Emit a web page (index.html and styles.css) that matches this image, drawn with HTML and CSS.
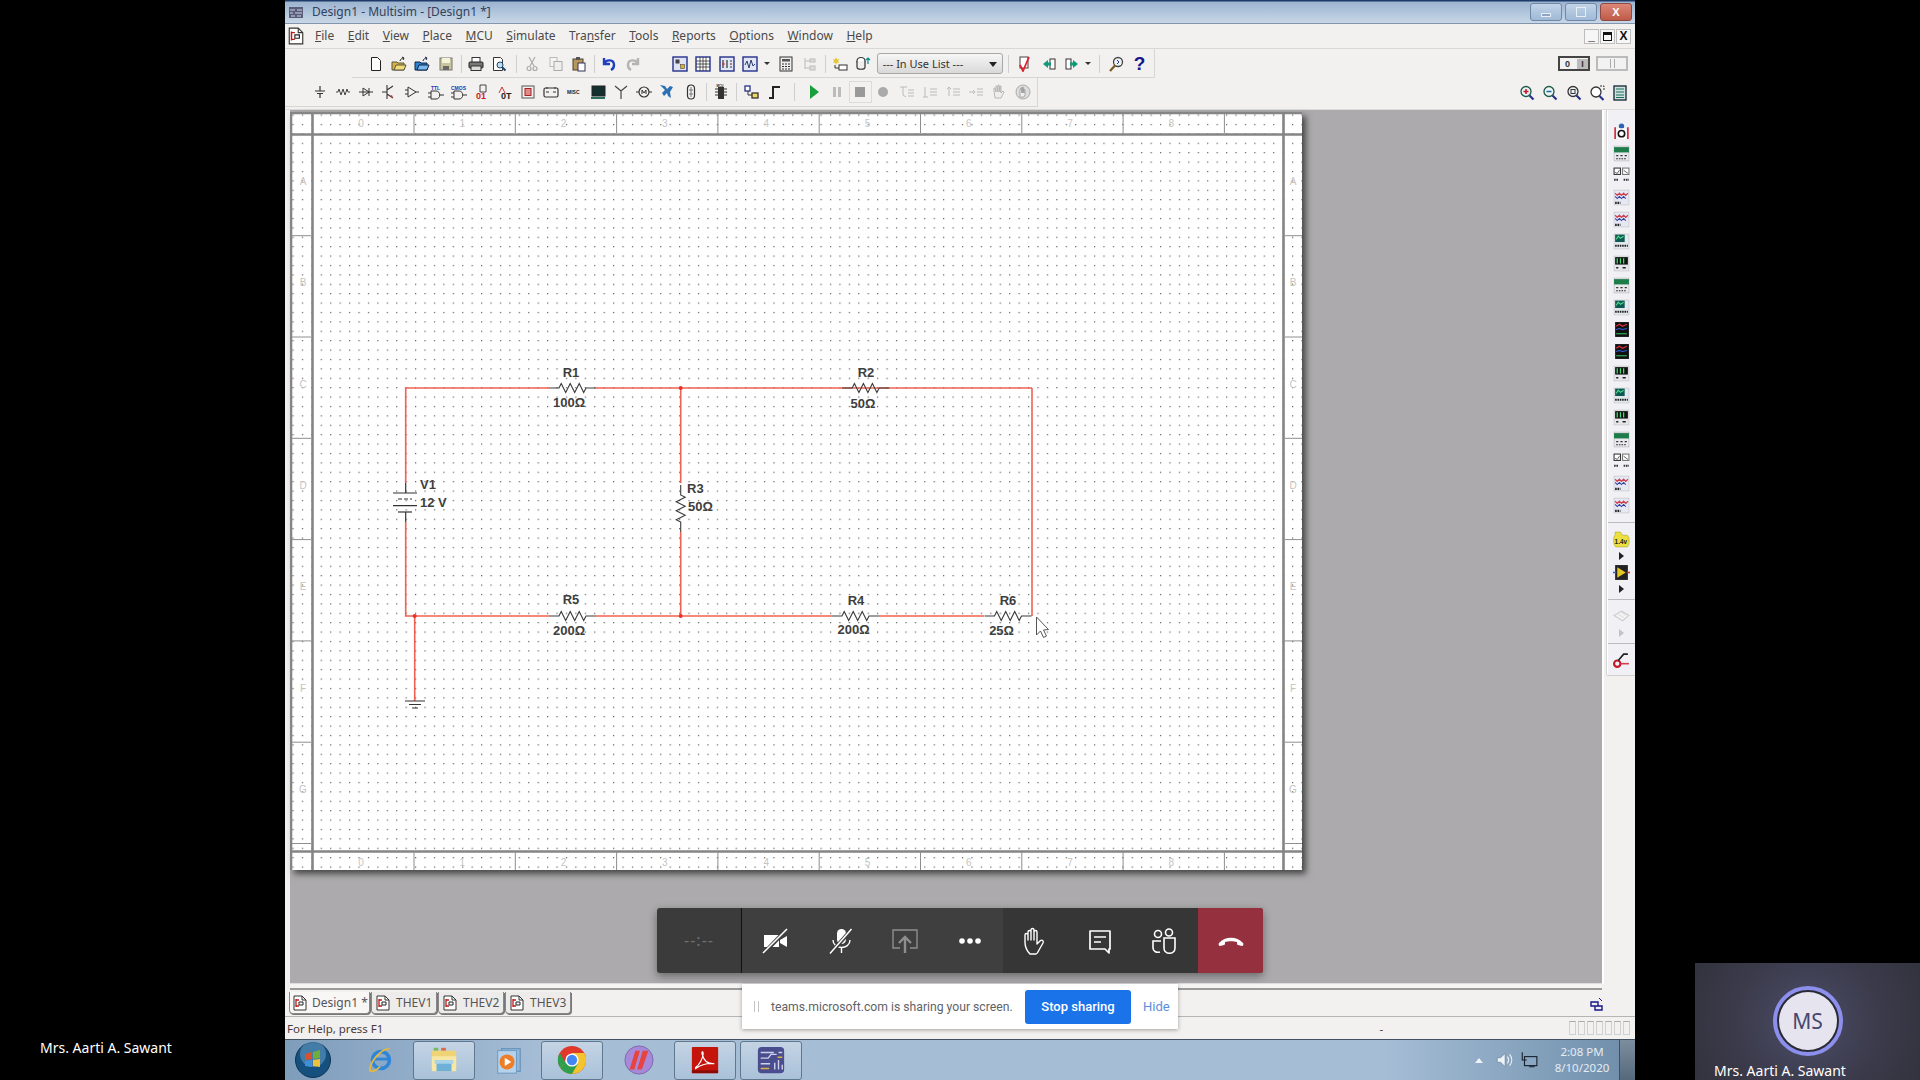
FILE: index.html
```html
<!DOCTYPE html>
<html lang="en">
<head>
    <meta charset="UTF-8">
    <title>Design1 - Multisim</title>
    <link rel="stylesheet" href="styles.css">
</head>
<body>
    <!-- icon sprite -->
    <svg class="sprite" xmlns="http://www.w3.org/2000/svg">
        <symbol id="i-doc" viewBox="0 0 16 16"><path d="M2 1h8l4 4v10H2z" fill="#fff" stroke="#333"/><path d="M10 1v4h4" fill="none" stroke="#333"/><path d="M4 4v8M4 5h3M4 11h3" fill="none" stroke="#c01818" stroke-width="1.300"/><path d="M7 7h4v3H7z" fill="none" stroke="#222"/></symbol>
        <symbol id="i-new" viewBox="0 0 16 16"><path d="M3.5 1.500h6l3 3v10h-9z" fill="#fff" stroke="#222"/></symbol>
        <symbol id="i-open" viewBox="0 0 16 16"><path d="M1 6h5l1 1h6v7H1z" fill="#d9b23c" stroke="#554"/><path d="M3 14l2-5h10l-2 5z" fill="#f3dc78" stroke="#554"/><path d="M9 5c1-3 3-3 4-3m0 0l-2-1m2 1l-1 2" stroke="#222" fill="none"/></symbol>
        <symbol id="i-open2" viewBox="0 0 16 16"><path d="M1 6h5l1 1h6v7H1z" fill="#2d7fd0" stroke="#124"/><path d="M3 14l2-5h10l-2 5z" fill="#7ab8f0" stroke="#124"/><path d="M9 5c1-3 3-3 4-3m0 0l-2-1m2 1l-1 2" stroke="#124" fill="none"/></symbol>
        <symbol id="i-save" viewBox="0 0 16 16"><rect x="2" y="2" width="12" height="12" fill="#c8c59a" stroke="#777"/><rect x="4" y="2" width="8" height="5" fill="#f4f2d8"/><rect x="5" y="10" width="6" height="4" fill="#666"/></symbol>
        <symbol id="i-print" viewBox="0 0 16 16"><rect x="4" y="1.500" width="8" height="5" fill="#fff" stroke="#333"/><rect x="1" y="6" width="14" height="6" rx="1" fill="#777" stroke="#222"/><rect x="3" y="10" width="10" height="4.500" fill="#ddd" stroke="#333"/></symbol>
        <symbol id="i-preview" viewBox="0 0 16 16"><path d="M2.500 1.500h7l2 2v11h-9z" fill="#fff" stroke="#333"/><circle cx="9" cy="9" r="3" fill="#bfe0ef" stroke="#246"/><path d="M11 11l3.500 3.500" stroke="#246" stroke-width="2"/></symbol>
        <symbol id="i-cut" viewBox="0 0 16 16"><path d="M5 1l5 9M11 1L6 10" stroke="#aaa" stroke-width="1.200" fill="none"/><circle cx="5" cy="12.500" r="2" fill="none" stroke="#aaa" stroke-width="1.200"/><circle cx="11" cy="12.500" r="2" fill="none" stroke="#aaa" stroke-width="1.200"/></symbol>
        <symbol id="i-copy" viewBox="0 0 16 16"><rect x="2" y="1.500" width="7" height="9" fill="#f4f4f4" stroke="#bbb"/><rect x="6" y="5.500" width="8" height="9" fill="#eee" stroke="#aaa"/></symbol>
        <symbol id="i-paste" viewBox="0 0 16 16"><rect x="2" y="3" width="10" height="11" fill="#b9965a" stroke="#443"/><rect x="5" y="1" width="4" height="3" fill="#555"/><rect x="7" y="7" width="7" height="8" fill="#fff" stroke="#335"/></symbol>
        <symbol id="i-undo" viewBox="0 0 16 16"><path d="M3 2v6h6M3 8c2-5 10-5 10 1 0 2-1 4-3 5" fill="none" stroke="#1f3fc0" stroke-width="2.400"/></symbol>
        <symbol id="i-redo" viewBox="0 0 16 16"><path d="M13 2v6H7M13 8C11 3 3 3 3 9c0 2 1 4 3 5" fill="none" stroke="#b4b4b4" stroke-width="2.400"/></symbol>
        <symbol id="i-hier" viewBox="0 0 16 16"><rect x="1" y="1" width="14" height="14" fill="#dfe3f5" stroke="#24308a" stroke-width="1.400"/><rect x="3.500" y="3.500" width="4" height="4" fill="#444"/><rect x="8.500" y="8.500" width="4" height="4" fill="#d8b030" stroke="#333" stroke-width=".5"/></symbol>
        <symbol id="i-grid" viewBox="0 0 16 16"><rect x="1" y="1" width="14" height="14" fill="#fff" stroke="#24308a" stroke-width="1.400"/><path d="M1 5h14M1 8h14M1 11h14M5 1v14M8 1v14M11 1v14" stroke="#333" stroke-width=".8"/></symbol>
        <symbol id="i-bars" viewBox="0 0 16 16"><rect x="1" y="1" width="14" height="14" fill="#e3e6f5" stroke="#24308a" stroke-width="1.400"/><path d="M4 4v8M8 4v8M11 5h2M11 8h2M11 11h2" stroke="#333" stroke-width="1.200"/><path d="M3 8h3" stroke="#c33"/></symbol>
        <symbol id="i-wave" viewBox="0 0 16 16"><rect x="1" y="1" width="14" height="14" fill="#e3e6f5" stroke="#24308a" stroke-width="1.400"/><path d="M3 9l2-4 2 7 2-8 2 6 2-2" fill="none" stroke="#2a3a6a"/></symbol>
        <symbol id="i-calc" viewBox="0 0 16 16"><rect x="2" y="1" width="12" height="14" fill="#eee" stroke="#333"/><rect x="4" y="3" width="8" height="2.500" fill="#555"/><path d="M4 8h2M7 8h2M10 8h2M4 10.500h2M7 10.500h2M10 10.500h2M4 13h2M7 13h2M10 13h2" stroke="#333" stroke-width="1.200"/></symbol>
        <symbol id="i-tree" viewBox="0 0 16 16"><path d="M4 2v11M4 5h5M4 12h5" stroke="#bbb" fill="none"/><rect x="9" y="3" width="5" height="3" fill="#ddd" stroke="#bbb"/><rect x="9" y="10" width="5" height="4" fill="#ddd" stroke="#bbb"/></symbol>
        <symbol id="i-star" viewBox="0 0 16 16"><path d="M4 1l1 2.500 2.500-.5-1.500 2 1.500 2-2.500-.5L4 9 3 6.500 1 7l1-2-1-2 2 .5z" fill="#e2c632"/><rect x="7" y="9" width="8" height="5" fill="#fff" stroke="#333"/><path d="M3 9v3h4" stroke="#333" fill="none"/></symbol>
        <symbol id="i-db" viewBox="0 0 16 16"><ellipse cx="6" cy="5" rx="4" ry="3.500" fill="#fff" stroke="#333" stroke-width="1.200"/><path d="M2 5v6c0 3 8 3 8 0V5" fill="#eee" stroke="#333" stroke-width="1.200"/><path d="M13 8V2m-2 2l2-2 2 2" stroke="#0a8a8a" fill="none" stroke-width="1.200"/></symbol>
        <symbol id="i-check" viewBox="0 0 16 16"><rect x="3" y="1" width="8" height="11" fill="#fff" stroke="#444"/><path d="M3 9l3 6 6-14" fill="none" stroke="#e02030" stroke-width="1.800"/></symbol>
        <symbol id="i-back" viewBox="0 0 16 16"><rect x="9" y="3" width="5" height="10" fill="#fff" stroke="#333"/><path d="M2 8l5-4v8z" fill="#109a78"/><rect x="6" y="6.500" width="4" height="3" fill="#109a78"/></symbol>
        <symbol id="i-fwd" viewBox="0 0 16 16"><rect x="2" y="3" width="5" height="10" fill="#fff" stroke="#333"/><path d="M14 8L9 4v8z" fill="#109a78"/><rect x="6" y="6.500" width="4" height="3" fill="#109a78"/></symbol>
        <symbol id="i-find" viewBox="0 0 16 16"><circle cx="10" cy="6" r="4.500" fill="#eef3f8" stroke="#444" stroke-width="1.300"/><path d="M7 9.500L2 15" stroke="#7a5a20" stroke-width="2.200"/><path d="M9 4l2 2-2 2" stroke="#24308a" fill="none"/></symbol>

        <symbol id="i-src" viewBox="0 0 16 16"><path d="M8 2v5M8 9v5M3 7h10M5 9.500h6" stroke="#333" stroke-width="1.200"/></symbol>
        <symbol id="i-zig" viewBox="0 0 16 16"><path d="M1 8h2l1-3 2 6 2-6 2 6 2-6 1 3h2" fill="none" stroke="#444"/></symbol>
        <symbol id="i-dio" viewBox="0 0 16 16"><path d="M1 8h14M11 4v8M5 4l6 4-6 4z" fill="none" stroke="#333"/></symbol>
        <symbol id="i-tra" viewBox="0 0 16 16"><path d="M6 1v14M1 8h5M6 6l6-4M6 10l6 4" fill="none" stroke="#333" stroke-width="1.100"/><path d="M9 12l3 2-1-3z" fill="#c33"/></symbol>
        <symbol id="i-amp" viewBox="0 0 16 16"><path d="M4 3l8 5-8 5zM1 6h3M1 10h3M12 8h3" fill="none" stroke="#333"/></symbol>
        <symbol id="i-ind" viewBox="0 0 16 16"><rect x="2" y="2" width="12" height="12" fill="none" stroke="#555"/><rect x="5" y="4.500" width="6" height="7" fill="#e08a8a" stroke="#a22"/></symbol>
        <symbol id="i-pow" viewBox="0 0 16 16"><rect x="1" y="4" width="14" height="9" rx="1.500" fill="none" stroke="#333" stroke-width="1.200"/><path d="M4 3v2M12 3v2M3 8h3M10 8h3" stroke="#333"/></symbol>
        <symbol id="i-scr" viewBox="0 0 16 16"><rect x="2" y="2" width="13" height="10" fill="#14302e" stroke="#222"/><path d="M1 13h14v2H1z" fill="#2a6e60"/></symbol>
        <symbol id="i-ant" viewBox="0 0 16 16"><path d="M8 15V7M2 2l6 5 6-5" fill="none" stroke="#444" stroke-width="1.200"/></symbol>
        <symbol id="i-mot" viewBox="0 0 16 16"><circle cx="8" cy="8" r="5" fill="none" stroke="#333" stroke-width="1.200"/><path d="M0 8h3M13 8h3M6 10V6l2 3 2-3v4" fill="none" stroke="#333"/></symbol>
        <symbol id="i-x" viewBox="0 0 16 16"><path d="M1 1l5 1 2 3 3-3 3 1-3 5 1 6-3-2-1-3-3 3-2-3 3-3z" fill="#2c6fb2"/></symbol>
        <symbol id="i-bulb" viewBox="0 0 16 16"><rect x="4.500" y="1" width="7" height="14" rx="3.500" fill="#f4f4f4" stroke="#333" stroke-width="1.200"/><path d="M8 3v10M6 6h4M6 10h4" stroke="#777"/></symbol>
        <symbol id="i-sub" viewBox="0 0 16 16"><rect x="2" y="2" width="5" height="5" fill="#fff" stroke="#24308a" stroke-width="1.300"/><rect x="9" y="9" width="6" height="5" fill="#f0d860" stroke="#333" stroke-width="1.300"/><path d="M5 7v4h4" fill="none" stroke="#333"/></symbol>
        <symbol id="i-step" viewBox="0 0 16 16"><path d="M2 14h4V3h7" fill="none" stroke="#222" stroke-width="2"/></symbol>
        <symbol id="i-play" viewBox="0 0 16 16"><path d="M4 1l9 7-9 7z" fill="#17a03c"/></symbol>
        <symbol id="i-pause" viewBox="0 0 16 16"><path d="M4 3h3v10H4zM9 3h3v10H9z" fill="#bbb"/></symbol>
        <symbol id="i-stop" viewBox="0 0 16 16"><rect x="3" y="3" width="10" height="10" fill="#999"/></symbol>
        <symbol id="i-brk" viewBox="0 0 16 16"><circle cx="8" cy="8" r="5" fill="#aaa"/></symbol>
        <symbol id="i-lst1" viewBox="0 0 16 16"><path d="M1 3h7M4 3v8l3 2M9 6h6M9 9h6M9 12h6" fill="none" stroke="#bbb"/></symbol>
        <symbol id="i-lst2" viewBox="0 0 16 16"><path d="M3 3v10M1 13h5M8 5h7M8 8h7M8 11h7" fill="none" stroke="#bbb"/></symbol>
        <symbol id="i-lst3" viewBox="0 0 16 16"><path d="M4 12V3M2 5l2-2 2 2M8 5h7M8 8h7M8 11h7" fill="none" stroke="#bbb"/></symbol>
        <symbol id="i-lst4" viewBox="0 0 16 16"><path d="M1 8h6M5 6l2 2-2 2M9 5h6M9 8h6M9 11h6" fill="none" stroke="#bbb"/></symbol>
        <symbol id="i-hand" viewBox="0 0 16 16"><path d="M4 14L3 7V4l1 0 1 4V2h1l1 6V1h1l1 7V2h1v7l2-2 1 1-3 6z" fill="#eee" stroke="#aaa" stroke-width=".8"/></symbol>
        <symbol id="i-hand2" viewBox="0 0 16 16"><circle cx="8" cy="8" r="7" fill="#ddd" stroke="#aaa"/><path d="M5 13V6l1-2 1 5V3l1 6V3l1 6V5l1 1v5l-1 2z" fill="#eee" stroke="#999" stroke-width=".8"/></symbol>
        <symbol id="i-zin" viewBox="0 0 16 16"><circle cx="7" cy="6.500" r="5" fill="#eef3f4" stroke="#1c5a4a" stroke-width="1.300"/><path d="M7 4v5M4.500 6.500h5" stroke="#c01828" stroke-width="1.500"/><path d="M10.500 10.500l4 4" stroke="#24308a" stroke-width="2.200"/></symbol>
        <symbol id="i-zout" viewBox="0 0 16 16"><circle cx="7" cy="6.500" r="5" fill="#eef3f4" stroke="#1c5a4a" stroke-width="1.300"/><path d="M4.500 6.500h5" stroke="#1c6a9a" stroke-width="1.500"/><path d="M10.500 10.500l4 4" stroke="#24308a" stroke-width="2.200"/></symbol>
        <symbol id="i-zarea" viewBox="0 0 16 16"><circle cx="7" cy="6.500" r="5" fill="#eef3f4" stroke="#333" stroke-width="1.300"/><rect x="5" y="4.500" width="4" height="4" fill="none" stroke="#333"/><path d="M10.500 10.500l4 4" stroke="#24308a" stroke-width="2.200"/></symbol>
        <symbol id="i-zfit" viewBox="0 0 16 16"><circle cx="7" cy="7" r="5" fill="#fff" stroke="#333" stroke-width="1.300"/><path d="M10.500 11l4 4" stroke="#24308a" stroke-width="2.200"/><path d="M11 1h4v4" fill="none" stroke="#333" stroke-dasharray="2 1"/></symbol>
        <symbol id="i-sheet" viewBox="0 0 16 16"><rect x="2" y="1" width="12" height="14" fill="#cfe3dc" stroke="#123" stroke-width="1.300"/><path d="M4 4h8M4 7h8M4 10h8M4 12.500h8" stroke="#1a6a60"/></symbol>

        <symbol id="t-multi" viewBox="0 0 16 16"><circle cx="8" cy="3" r="2.500" fill="#2a62b4"/><path d="M4 5h8v10H4z" fill="#fff"/><path d="M2 4v11M14 4v11" stroke="#d02030" stroke-width="1.500"/><circle cx="8" cy="10" r="3" fill="none" stroke="#111" stroke-width="1.500"/></symbol>
        <symbol id="t-green" viewBox="0 0 16 16"><rect x="1" y="1" width="14" height="14" fill="#e9e9ee" stroke="#aaa" stroke-width=".5"/><rect x="1" y="2" width="14" height="5" fill="#1d7c4a"/><path d="M3 10h2M7 10h2M11 10h2" stroke="#333"/><path d="M3 13h10" stroke="#222" stroke-dasharray="1.500 1"/></symbol>
        <symbol id="t-bode" viewBox="0 0 16 16"><rect x="1" y="1" width="6" height="6" fill="#fff" stroke="#333"/><rect x="9" y="1" width="6" height="6" fill="#fff" stroke="#777"/><path d="M2 5l2 1 2-3M10 3l4 3" stroke="#333" fill="none" stroke-width=".7"/><path d="M1 12h4M10 12h5" stroke="#333" stroke-width="2" stroke-dasharray="1.500 .7"/></symbol>
        <symbol id="t-wave" viewBox="0 0 16 16"><rect x="1" y="1" width="14" height="14" fill="#e6e8f4" stroke="#bbb" stroke-width=".5"/><path d="M2 4l2 2 2-2 2 2 2-2 2 2 2-2" fill="none" stroke="#d04050" stroke-width="1.200"/><path d="M2 7l2 2 2-2 2 2 2-2 2 2" fill="none" stroke="#3040a0"/><path d="M2 13h5" stroke="#222" stroke-width="2" stroke-dasharray="1.500 .7"/></symbol>
        <symbol id="t-dark" viewBox="0 0 16 16"><rect x="1" y="1" width="14" height="14" fill="#e6e8f0" stroke="#bbb" stroke-width=".5"/><rect x="2" y="1.500" width="9" height="7" fill="#0e5a52"/><path d="M3 6l2-3 2 2 3-2" stroke="#4ddc80" fill="none"/><path d="M2 12h12" stroke="#222" stroke-width="2" stroke-dasharray="1.500 .7"/></symbol>
        <symbol id="t-black" viewBox="0 0 16 16"><rect x="1" y="1" width="14" height="14" fill="#e6e6ea" stroke="#bbb" stroke-width=".5"/><rect x="2" y="2" width="12" height="7" fill="#111"/><path d="M4 3v5M7 3v5M10 3v5" stroke="#3ae070" stroke-width="1.200"/><path d="M3 12h2M9 12h3" stroke="#222" stroke-width="1.500"/></symbol>
        <symbol id="t-red" viewBox="0 0 16 16"><rect x="2" y="1" width="13" height="14" fill="#111"/><path d="M3 5l3-2 3 2 4-2" stroke="#e03040" fill="none"/><path d="M3 8l3-1 3 1 4-1" stroke="#3060e0" fill="none"/><path d="M3 12h10" stroke="#30c060"/></symbol>
        <symbol id="t-lab" viewBox="0 0 16 16"><rect x="2" y="1" width="12" height="14" fill="#222"/><path d="M4 3l8 5-8 5z" fill="#e4c820"/><path d="M0 8h3" stroke="#3060d0" stroke-width="1.500"/><path d="M13 8h3" stroke="#d03030" stroke-width="1.500"/></symbol>
        <symbol id="t-gray" viewBox="0 0 16 16"><path d="M1 7l7-4 7 4-6 5z" fill="#f4f4f4" stroke="#ccc"/><path d="M5 6l5 3M8 4l4 3" stroke="#ddd"/></symbol>
        <symbol id="t-probe" viewBox="0 0 16 16"><circle cx="4" cy="11" r="3" fill="none" stroke="#c01828" stroke-width="2"/><path d="M7 11h8" stroke="#d04050" stroke-width="1.500"/><path d="M5 8l5-6h4" stroke="#222" stroke-width="1.500" fill="none"/></symbol>
    </svg>

    <div class="side-left">Mrs. Aarti A. Sawant</div>

    <div class="window">
        <div class="titlebar">
            <svg class="title-ico" viewBox="0 0 16 16"><rect x="1" y="3" width="14" height="11" fill="#5a5e78"/><path d="M2 6h5M9 6h5M2 9h3M7 9h7M3 12h4M9 12h4" stroke="#cfd3e6"/></svg>
            <span class="title-text">Design1 - Multisim - [Design1 *]</span>
            <div class="win-btns">
                <div class="win-btn"><span class="glyph-min"></span></div>
                <div class="win-btn"><span class="glyph-max"></span></div>
                <div class="win-btn close">X</div>
            </div>
        </div>

        <div class="menubar">
            <svg class="menu-ico"><use href="#i-doc"/></svg>
            <nav class="menu">
                <span><u>F</u>ile</span>
                <span><u>E</u>dit</span>
                <span><u>V</u>iew</span>
                <span><u>P</u>lace</span>
                <span><u>M</u>CU</span>
                <span><u>S</u>imulate</span>
                <span>Tra<u>n</u>sfer</span>
                <span><u>T</u>ools</span>
                <span><u>R</u>eports</span>
                <span><u>O</u>ptions</span>
                <span><u>W</u>indow</span>
                <span><u>H</u>elp</span>
            </nav>
            <div class="mini-btns">
                <div class="mini-btn">_</div>
                <div class="mini-btn"><span class="mini-restore"></span></div>
                <div class="mini-btn">X</div>
            </div>
        </div>

        <div class="toolbars">
            <div class="tool-row row-one">
                <div class="bar">
                    <div class="tool"><svg><use href="#i-new"/></svg></div>
                    <div class="tool"><svg><use href="#i-open"/></svg></div>
                    <div class="tool"><svg><use href="#i-open2"/></svg></div>
                    <div class="tool"><svg><use href="#i-save"/></svg></div>
                    <div class="sep"></div>
                    <div class="tool"><svg><use href="#i-print"/></svg></div>
                    <div class="tool"><svg><use href="#i-preview"/></svg></div>
                    <div class="sep wide"></div>
                    <div class="tool"><svg><use href="#i-cut"/></svg></div>
                    <div class="tool"><svg><use href="#i-copy"/></svg></div>
                    <div class="tool"><svg><use href="#i-paste"/></svg></div>
                    <div class="sep"></div>
                    <div class="tool"><svg><use href="#i-undo"/></svg></div>
                    <div class="tool"><svg><use href="#i-redo"/></svg></div>
                    <div class="gap-24"></div>
                    <div class="tool"><svg><use href="#i-hier"/></svg></div>
                    <div class="tool"><svg><use href="#i-grid"/></svg></div>
                    <div class="tool"><svg><use href="#i-bars"/></svg></div>
                    <div class="tool"><svg><use href="#i-wave"/></svg></div>
                    <div class="caret"></div>
                    <div class="tool"><svg><use href="#i-calc"/></svg></div>
                    <div class="tool"><svg><use href="#i-tree"/></svg></div>
                    <div class="sep"></div>
                    <div class="tool"><svg><use href="#i-star"/></svg></div>
                    <div class="tool"><svg><use href="#i-db"/></svg></div>
                    <div class="dropdown"><span>--- In Use List ---</span><i class="drop-arrow"></i></div>
                    <div class="sep wider"></div>
                    <div class="tool"><svg><use href="#i-check"/></svg></div>
                    <div class="tool"><svg><use href="#i-back"/></svg></div>
                    <div class="tool"><svg><use href="#i-fwd"/></svg></div>
                    <div class="caret short"></div>
                    <div class="sep mid"></div>
                    <div class="tool"><svg><use href="#i-find"/></svg></div>
                    <div class="tool help">?</div>
                </div>
                <div class="sim-switch">
                    <div class="switch-box">
                        <span class="sw-zero">0</span><span class="sw-one">I</span>
                    </div>
                    <div class="switch-box off"><span class="sw-pause"></span></div>
                </div>
            </div>
            <div class="tool-row row-two">
                <div class="bar">
                    <div class="tool"><svg><use href="#i-src"/></svg></div>
                    <div class="tool"><svg><use href="#i-zig"/></svg></div>
                    <div class="tool"><svg><use href="#i-dio"/></svg></div>
                    <div class="tool"><svg><use href="#i-tra"/></svg></div>
                    <div class="tool"><svg><use href="#i-amp"/></svg></div>
                    <div class="tool">
                        <svg viewBox="0 0 16 16"><path d="M3 7h5c5 0 5 8 0 8H3z" fill="none" stroke="#333"/><path d="M0 9h3M0 13h3M12 11h4" stroke="#333"/><text x="3" y="5.500" class="ico-tx blue">TTL</text></svg>
                    </div>
                    <div class="tool">
                        <svg viewBox="0 0 16 16"><path d="M3 7h5c5 0 5 8 0 8H3z" fill="none" stroke="#333"/><path d="M0 9h3M0 13h3M12 11h4" stroke="#333"/><text x="0" y="5.500" class="ico-tx blue">CMOS</text></svg>
                    </div>
                    <div class="tool">
                        <svg viewBox="0 0 16 16"><path d="M6 1h6v7H6z" fill="none" stroke="#444"/><text x="2" y="15" class="ico-bold red">01</text></svg>
                    </div>
                    <div class="tool">
                        <svg viewBox="0 0 16 16"><path d="M2 9l3-6 3 6" fill="none" stroke="#c33"/><text x="4" y="15" class="ico-bold dark">0T</text></svg>
                    </div>
                    <div class="tool"><svg><use href="#i-ind"/></svg></div>
                    <div class="tool"><svg><use href="#i-pow"/></svg></div>
                    <div class="tool">
                        <svg viewBox="0 0 16 16"><text x="0" y="10" class="ico-tx dark">MISC</text></svg>
                    </div>
                    <div class="tool"><svg><use href="#i-scr"/></svg></div>
                    <div class="tool"><svg><use href="#i-ant"/></svg></div>
                    <div class="tool"><svg><use href="#i-mot"/></svg></div>
                    <div class="tool"><svg><use href="#i-x"/></svg></div>
                    <div class="tool"><svg><use href="#i-bulb"/></svg></div>
                    <div class="sep thin"></div>
                    <div class="tool">
                        <svg viewBox="0 0 16 16"><rect x="5" y="3" width="6" height="12" fill="#333"/><path d="M2 5h3M2 8h3M2 11h3M11 5h3M11 8h3M11 11h3" stroke="#333"/><text x="3.500" y="2.500" class="ico-mini dark">MCU</text></svg>
                    </div>
                    <div class="sep"></div>
                    <div class="tool"><svg><use href="#i-sub"/></svg></div>
                    <div class="tool"><svg><use href="#i-step"/></svg></div>
                    <div class="sep big"></div>
                    <div class="tool"><svg><use href="#i-play"/></svg></div>
                    <div class="tool"><svg><use href="#i-pause"/></svg></div>
                    <div class="tool pressed"><svg><use href="#i-stop"/></svg></div>
                    <div class="tool"><svg><use href="#i-brk"/></svg></div>
                    <div class="tool"><svg><use href="#i-lst1"/></svg></div>
                    <div class="tool"><svg><use href="#i-lst2"/></svg></div>
                    <div class="tool"><svg><use href="#i-lst3"/></svg></div>
                    <div class="tool"><svg><use href="#i-lst4"/></svg></div>
                    <div class="tool"><svg><use href="#i-hand"/></svg></div>
                    <div class="tool"><svg><use href="#i-hand2"/></svg></div>
                </div>
                <div class="zoom-tools">
                    <div class="tool"><svg><use href="#i-zin"/></svg></div>
                    <div class="tool"><svg><use href="#i-zout"/></svg></div>
                    <div class="tool"><svg><use href="#i-zarea"/></svg></div>
                    <div class="tool"><svg><use href="#i-zfit"/></svg></div>
                    <div class="tool"><svg><use href="#i-sheet"/></svg></div>
                </div>
            </div>
        </div>

        <div class="main">
            <div class="work">
                <!-- viewBox uses page coordinates so the schematic reads straight off the screenshot -->
                <svg class="sheet" width="1012" height="758" viewBox="290 112 1012 758">
                    <defs>
                        <pattern id="dots" x="320.7" y="142.7" width="9.43" height="9.4" patternUnits="userSpaceOnUse">
                            <rect width="1.2" height="1.2" fill="#5c5c5c"/>
                        </pattern>
                        <path id="res" d="M-23.500 0H-13.500l2.200-4.500 4.500 9 4.500-9 4.500 9 4.500-9 4.500 9 2.300-4.500H23.500" fill="none" stroke="#3c3c3c" stroke-width="1.100"/>
                    </defs>
                    <rect x="290" y="112" width="1012" height="758" fill="#fff"/>
                    <rect x="290" y="112" width="1012" height="758" fill="url(#dots)"/>

                    <g class="frame">
                        <path d="M291 112V870M290 113H1302"/>
                        <path d="M290 134.500H1302M312.500 112V870M1283.500 112V870M290 851.500H1302"/>
                    </g>
                    <g class="ticks">
                        <path d="M414 114V133M515.300 114V133M616.600 114V133M717.900 114V133M819.200 114V133M920.500 114V133M1021.800 114V133M1123.100 114V133M1224.400 114V133"/>
                        <path d="M414 852V870M515.300 852V870M616.600 852V870M717.900 852V870M819.200 852V870M920.500 852V870M1021.800 852V870M1123.100 852V870M1224.400 852V870"/>
                        <path d="M292 235.700H311M292 337H311M292 438.300H311M292 539.600H311M292 640.900H311M292 742.200H311M292 843.500H311"/>
                        <path d="M1285 235.700H1302M1285 337H1302M1285 438.300H1302M1285 539.600H1302M1285 640.900H1302M1285 742.200H1302M1285 843.500H1302"/>
                    </g>
                    <g class="ruler">
                        <text x="361" y="127">0</text><text x="462.300" y="127">1</text><text x="563.600" y="127">2</text><text x="664.900" y="127">3</text><text x="766.200" y="127">4</text><text x="867.500" y="127">5</text><text x="968.800" y="127">6</text><text x="1070.100" y="127">7</text><text x="1171.400" y="127">8</text>
                        <text x="361" y="866">0</text><text x="462.300" y="866">1</text><text x="563.600" y="866">2</text><text x="664.900" y="866">3</text><text x="766.200" y="866">4</text><text x="867.500" y="866">5</text><text x="968.800" y="866">6</text><text x="1070.100" y="866">7</text><text x="1171.400" y="866">8</text>
                        <text x="303" y="185">A</text><text x="303" y="286">B</text><text x="303" y="388">C</text><text x="303" y="489">D</text><text x="303" y="590">E</text><text x="303" y="692">F</text><text x="303" y="793">G</text>
                        <text x="1293" y="185">A</text><text x="1293" y="286">B</text><text x="1293" y="388">C</text><text x="1293" y="489">D</text><text x="1293" y="590">E</text><text x="1293" y="692">F</text><text x="1293" y="793">G</text>
                    </g>

                    <g class="wire">
                        <path d="M405.700 483V388H549M596 388H842.500"/>
                        <path d="M1032 388V616"/>
                        <path d="M842 388H1032"/>
                        <path d="M405.700 522V616H549M596 616H832M879 616H984"/>
                        <path d="M680.700 388V483M680.700 532V616M414.700 616V701"/>
                    </g>
                    <use href="#res" x="572.500" y="388"/>
                    <use href="#res" x="865.700" y="388"/>
                    <use href="#res" x="572.500" y="616"/>
                    <use href="#res" x="855.500" y="616"/>
                    <use href="#res" x="1008" y="616"/>
                    <use href="#res" transform="translate(680.700 508.500) rotate(90)"/>

                    <g class="sym">
                        <path d="M405.700 483V493M393 493H417M405.700 512V522M393 505.700H417"/>
                        <path d="M398 499H412" stroke-dasharray="4 2"/>
                        <path d="M398 512H412" stroke-width="2"/>
                        <path d="M405 701H425M409 704.500H421M412 708H418"/>
                    </g>
                    <g class="node">
                        <circle cx="680.700" cy="388" r="2"/>
                        <circle cx="680.700" cy="616" r="2"/>
                        <circle cx="414.700" cy="616" r="2"/>
                    </g>

                    <g class="part">
                        <text x="571" y="376.500" class="mid">R1</text>
                        <text x="569" y="407" class="mid">100Ω</text>
                        <text x="866" y="377" class="mid">R2</text>
                        <text x="863" y="407.500" class="mid">50Ω</text>
                        <text x="420" y="489">V1</text>
                        <text x="420" y="506.500">12 V</text>
                        <text x="687" y="493">R3</text>
                        <text x="688" y="510.500">50Ω</text>
                        <text x="571" y="604" class="mid">R5</text>
                        <text x="569" y="635" class="mid">200Ω</text>
                        <text x="856" y="604.500" class="mid">R4</text>
                        <text x="853.500" y="634" class="mid">200Ω</text>
                        <text x="1008" y="604.500" class="mid">R6</text>
                        <text x="1001.600" y="634.500" class="mid">25Ω</text>
                    </g>
                    <path class="cursor" d="M1036.500 617V635L1040.500 631L1043.500 637.500L1046.500 636L1043.500 630L1048.500 629.500Z"/>
                </svg>
            </div>

            <div class="toolbox">
                <div class="bench">
                    <svg><use href="#t-multi"/></svg>
                    <svg><use href="#t-green"/></svg>
                    <svg><use href="#t-bode"/></svg>
                    <svg><use href="#t-wave"/></svg>
                    <svg><use href="#t-wave"/></svg>
                    <svg><use href="#t-dark"/></svg>
                    <svg><use href="#t-black"/></svg>
                    <svg><use href="#t-green"/></svg>
                    <svg><use href="#t-dark"/></svg>
                    <svg><use href="#t-red"/></svg>
                    <svg><use href="#t-red"/></svg>
                    <svg><use href="#t-black"/></svg>
                    <svg><use href="#t-dark"/></svg>
                    <svg><use href="#t-black"/></svg>
                    <svg><use href="#t-green"/></svg>
                    <svg><use href="#t-bode"/></svg>
                    <svg><use href="#t-wave"/></svg>
                    <svg><use href="#t-wave"/></svg>
                </div>
                <div class="bench-group">
                    <svg viewBox="0 0 16 16"><path d="M2 4V1h5l2 3h4c3 0 3 11 0 11H3C0 15 0 4 2 4z" fill="#ece040" stroke="#a09a20" stroke-width=".5"/><text x="1.500" y="12.500" class="ico-bold small dark">1.4v</text></svg>
                    <i class="more"></i>
                    <svg><use href="#t-lab"/></svg>
                    <i class="more"></i>
                </div>
                <div class="bench-group">
                    <svg><use href="#t-gray"/></svg>
                    <i class="more off"></i>
                </div>
                <div class="bench-group">
                    <svg><use href="#t-probe"/></svg>
                </div>
            </div>
        </div>

        <div class="tabbar">
            <div class="tab active"><svg><use href="#i-doc"/></svg><span>Design1 *</span></div>
            <div class="tab"><svg><use href="#i-doc"/></svg><span>THEV1</span></div>
            <div class="tab"><svg><use href="#i-doc"/></svg><span>THEV2</span></div>
            <div class="tab"><svg><use href="#i-doc"/></svg><span>THEV3</span></div>
            <svg class="tab-end" viewBox="0 0 16 16"><path d="M2 6h7v4H2zM6 10v4h7v-4z" fill="none" stroke="#16168a" stroke-width="1.400"/><path d="M10 2l3 3" stroke="#16168a"/></svg>
        </div>

        <div class="statusbar">
            <span>For Help, press F1</span>
            <span class="status-dash">-</span>
            <div class="panes"><i></i><i></i><i></i><i></i><i></i><i></i><i></i></div>
        </div>

        <div class="taskbar">
            <div class="task-start">
                <svg viewBox="0 0 36 36">
                    <circle cx="18" cy="18" r="17.500" fill="#16507f" stroke="#0d3450"/>
                    <circle cx="18" cy="12" r="13" fill="#6fa8cf" opacity=".5"/>
                    <path d="M10 12l7-2v7l-7 1z" fill="#d8532d"/>
                    <path d="M18 10l7-2v8l-7 1z" fill="#6eae3c"/>
                    <path d="M10 19l7-1v7l-7-1z" fill="#3f8fd8"/>
                    <path d="M18 18l7-1v8l-7-1z" fill="#f0c23a"/>
                </svg>
            </div>
            <div class="task-item first">
                <svg viewBox="0 0 32 32">
                    <circle cx="17" cy="16" r="9" fill="none" stroke="#2f86d8" stroke-width="4"/>
                    <path d="M9 15h17" stroke="#2f86d8" stroke-width="3"/>
                    <path d="M26 4C18 4 6 16 5 27c4 3 9-2 11-4" fill="none" stroke="#e8b93a" stroke-width="1.800"/>
                </svg>
            </div>
            <div class="task-item open">
                <svg viewBox="0 0 32 32">
                    <path d="M3 6h26v20H3z" fill="#f0d377"/>
                    <path d="M5 3h5v3H5z" fill="#7cb95c"/>
                    <path d="M13 3h5v3h-5z" fill="#d86a4a"/>
                    <path d="M3 12h26v16H3z" fill="#f7e7a4"/>
                    <path d="M8 18h16v10H8z" fill="#6fb0d8"/>
                    <path d="M6 16h20v4H6z" fill="#a8d2e8"/>
                </svg>
            </div>
            <div class="task-item">
                <svg viewBox="0 0 32 32">
                    <rect x="9" y="4" width="20" height="24" fill="#8fb8dc" stroke="#5a88b0"/>
                    <rect x="5" y="6" width="20" height="24" fill="#b5d2ea" stroke="#6c98c0"/>
                    <circle cx="15" cy="18" r="8" fill="#ee7d28"/>
                    <path d="M12.500 13.500l7 4.500-7 4.500z" fill="#fff"/>
                </svg>
            </div>
            <div class="task-item open">
                <svg viewBox="0 0 32 32">
                    <circle cx="16" cy="16" r="15" fill="#e0392b"/>
                    <path d="M3 23.500A15 15 0 0 0 16 31a15 15 0 0 0 13-22.500H16z" fill="#f4c430"/>
                    <path d="M3 23.500A15 15 0 0 0 16 31l6.500-11.500H9.500z" fill="#2e9e4f"/>
                    <path d="M16 16L3 23.500A15 15 0 0 1 3 8.500L9 19z" fill="#2e9e4f"/>
                    <circle cx="16" cy="16" r="7" fill="#fff"/>
                    <circle cx="16" cy="16" r="5.500" fill="#4285f4"/>
                </svg>
            </div>
            <div class="task-item push-a">
                <svg viewBox="0 0 32 32">
                    <circle cx="16" cy="16" r="15" fill="#a888d8" stroke="#7a68a8"/>
                    <path d="M12 6h5l-6 20H6zM20 6h6l-7 20h-5z" fill="#e8433f"/>
                </svg>
            </div>
            <div class="task-item open push-b">
                <svg viewBox="0 0 32 32">
                    <rect x="2" y="2" width="28" height="28" rx="1" fill="#c4140c"/>
                    <rect x="2" y="27" width="28" height="3" fill="#8c0a06"/>
                    <path d="M6 24c4-3 8-10 8-15 0-3-2-2-1 1 2 7 5 10 13 10-7-1-14 1-20 5z" fill="none" stroke="#fff" stroke-width="1.300"/>
                </svg>
            </div>
            <div class="task-item open push-b">
                <svg viewBox="0 0 32 32">
                    <rect x="2" y="2" width="28" height="28" rx="4" fill="#4a4d8e"/>
                    <path d="M5 8h14M24 8h4M5 14h8l3-4h6M5 20h10M20 26v-7M24 26v-10M28 26v-5" stroke="#cfd2ec" stroke-width="1.500" fill="none"/>
                    <path d="M23 13h5M5 25h9" stroke="#e0b24a" stroke-width="1.500"/>
                </svg>
            </div>
            <div class="tray">
                <div class="tray-ico"><span class="tray-up"></span></div>
                <div class="tray-ico">
                    <svg viewBox="0 0 16 16"><path d="M2 6h3l4-4v12l-4-4H2z" fill="#eef3f8" stroke="#66809a" stroke-width=".6"/><path d="M11 5c1.500 2 1.500 4 0 6M13 3c2.500 3 2.500 7 0 10" fill="none" stroke="#eef3f8"/></svg>
                </div>
                <div class="tray-ico">
                    <svg viewBox="0 0 16 16"><rect x="4" y="5" width="11" height="8" fill="#8aa8c4" stroke="#18222e"/><path d="M2 1v7h4M8 14h5" stroke="#18222e" fill="none"/></svg>
                </div>
                <div class="clock"><div>2:08 PM</div><div>8/10/2020</div></div>
                <div class="show-desktop"></div>
            </div>
        </div>
    </div>

    <div class="side-right">
        <div class="tile">
            <div class="avatar"><div class="avatar-in">MS</div></div>
            <div class="tile-name">Mrs. Aarti A. Sawant</div>
        </div>
    </div>

    <!-- Teams overlays -->
    <div class="call-bar">
        <div class="call-time">--:--</div>
        <div class="call-main">
            <div class="call-btn">
                <svg viewBox="0 0 28 28"><path d="M2 8h15v12H2zM18 13l7-4v11l-7-4z" fill="#fff"/><path d="M1 27L26 1" stroke="#3f3f3f" stroke-width="4"/><path d="M1 26L25 2" stroke="#fff" stroke-width="1.600"/></svg>
            </div>
            <div class="call-btn">
                <svg viewBox="0 0 28 28"><rect x="10" y="2" width="9" height="15" rx="4.500" fill="#fff"/><path d="M6 13c0 10 17 10 17 0M14.500 21v5" fill="none" stroke="#fff" stroke-width="1.400"/><path d="M3 27L25 2" stroke="#3f3f3f" stroke-width="4"/><path d="M3 26.500L24.500 2" stroke="#fff" stroke-width="1.500"/></svg>
            </div>
            <div class="call-btn dim">
                <svg viewBox="0 0 28 28"><path d="M9 21H2V3h24v18h-7" fill="none" stroke="#8e8e8e" stroke-width="1.400"/><path d="M14 26V10m-6 6l6-6 6 6" fill="none" stroke="#8e8e8e" stroke-width="2.400"/></svg>
            </div>
            <div class="call-btn">
                <svg viewBox="0 0 28 28"><circle cx="6" cy="14" r="2.800" fill="#fff"/><circle cx="14" cy="14" r="2.800" fill="#fff"/><circle cx="22" cy="14" r="2.800" fill="#fff"/></svg>
            </div>
        </div>
        <div class="call-side">
            <div class="call-btn">
                <svg viewBox="0 0 28 28"><path d="M9 27c-3-3-5-8-5-12V8c0-2 3-2 3 0v5V5c0-2 3-2 3 0v8V3c0-2 3-2 3 0v10V5c0-2 3-2 3 0v12l3-3c2-2 4 0 3 2l-4 7c-1 2-2 4-3 4z" fill="none" stroke="#fff" stroke-width="1.400" stroke-linejoin="round"/></svg>
            </div>
            <div class="call-btn">
                <svg viewBox="0 0 28 28"><path d="M4 4h20v18h-1v4l-4-4H4z" fill="none" stroke="#fff" stroke-width="1.700" stroke-linejoin="round"/><path d="M8 10h12M8 15h7" stroke="#fff" stroke-width="1.500"/></svg>
            </div>
            <div class="call-btn">
                <svg viewBox="0 0 28 28"><circle cx="8" cy="7" r="3.500" fill="none" stroke="#fff" stroke-width="1.600"/><circle cx="19" cy="5.500" r="3.500" fill="none" stroke="#fff" stroke-width="1.600"/><path d="M14 11h11v10c0 7-11 7-11 0z" fill="none" stroke="#fff" stroke-width="1.600"/><path d="M11 14H3v7c0 3 3 5 7 4" fill="none" stroke="#fff" stroke-width="1.600"/></svg>
            </div>
        </div>
        <div class="call-end">
            <svg viewBox="0 0 28 28"><path d="M2 16c6-7 18-7 24 0 1 1 0 3-1 3l-4-1c-1 0-1-1-1-3-3-1-9-1-12 0 0 2 0 3-1 3l-4 1c-1 0-2-2-1-3z" fill="#fff"/></svg>
        </div>
    </div>

    <div class="share-banner">
        <span class="share-grip"></span>
        <span class="share-text">teams.microsoft.com is sharing your screen.</span>
        <button class="share-stop">Stop sharing</button>
        <span class="share-hide">Hide</span>
    </div>
</body>
</html>
```

FILE: styles.css
```css
* {
    box-sizing: border-box;
}

html, body {
    margin: 0;
    height: 100%;
}

body {
    position: relative;
    display: flex;
    width: 1920px;
    height: 1080px;
    overflow: hidden;
    background-color: #000;
    font-family: "Noto Sans", Arial, sans-serif;
    color: #444;
}

.sprite {
    position: absolute;
    width: 0;
    height: 0;
}

.ico-tx { font: bold 5px "Liberation Sans", sans-serif; }
.ico-mini { font: bold 3px "Liberation Sans", sans-serif; }
.ico-bold { font: bold 9px "Liberation Sans", sans-serif; }
.ico-bold.small { font-size: 6px; }
.blue { fill: #2438b0; }
.red { fill: #d01818; }
.dark { fill: #222; }

/* black margins round the shared window */
.side-left {
    width: 285px;
    display: flex;
    align-items: flex-end;
    padding: 0 0 22px 40px;
    color: #fff;
    font-size: 14px;
    line-height: 20px;
}

.side-right {
    width: 285px;
    display: flex;
    justify-content: flex-end;
    align-items: flex-end;
}

.tile {
    width: 225px;
    height: 117px;
    background: radial-gradient(circle at 50% 50%, #4c4c68 0, #3a3a4a 60%, #33333e 100%);
    display: flex;
    flex-direction: column;
    overflow: hidden;
}

.avatar {
    width: 70px;
    height: 70px;
    margin: 23px auto 0;
    border: 4px solid #8c90ec;
    border-radius: 50%;
    background: #2b2b38;
    padding: 2px;
}

.avatar-in {
    width: 100%;
    height: 100%;
    border-radius: 50%;
    background: #e6e4ef;
    color: #46476e;
    font-size: 21px;
    line-height: 58px;
    text-align: center;
}

.tile-name {
    margin: 5px 0 0 19px;
    color: #fff;
    font-size: 14px;
    line-height: 20px;
    white-space: nowrap;
}

/* multisim window */
.window {
    width: 1350px;
    height: 1080px;
    display: flex;
    flex-direction: column;
    background: #f3f1ef;
}

.titlebar {
    height: 24px;
    display: flex;
    align-items: center;
    background: linear-gradient(180deg, #1d3a68 0, #1d3a68 1px, #9db4d0 2px, #b4c8de 14px, #c9d7e7 23px);
    border-bottom: 1px solid #8295ac;
}

.title-ico {
    width: 16px;
    height: 16px;
    margin-left: 3px;
}

.title-text {
    margin-left: 8px;
    font-size: 12px;
    color: #33415a;
}

.win-btns {
    margin-left: auto;
    margin-right: 3px;
    display: flex;
    gap: 3px;
}

.win-btn {
    width: 32px;
    height: 18px;
    border: 1px solid #6f88a8;
    border-radius: 3px;
    background: linear-gradient(180deg, #c2d4e8, #9fb9d6);
    display: flex;
    align-items: center;
    justify-content: center;
}

.win-btn.close {
    background: linear-gradient(180deg, #dc8878, #c05a48);
    border-color: #8e4a42;
    color: #fff;
    font: bold 11px "Liberation Sans", sans-serif;
}

.glyph-min {
    width: 10px;
    height: 4px;
    border: 1px solid #e8eef6;
    background: #8ca6c4;
    margin-top: 6px;
}

.glyph-max {
    width: 10px;
    height: 10px;
    border: 1px solid #e8eef6;
}

.menubar {
    height: 25px;
    display: flex;
    align-items: center;
    background: #f2f1f0;
    border-bottom: 1px solid #d8d8d8;
}

.menu-ico {
    width: 18px;
    height: 18px;
    margin: 0 12px 0 0;
    margin-left: 2px;
    flex: none;
}

.menu {
    display: flex;
    gap: 13.5px;
    margin-left: -2px;
    margin-top: -1px;
    font-size: 12px;
    color: #4a4a4a;
}

.mini-btns {
    margin-left: auto;
    margin-right: 4px;
    display: flex;
    gap: 1px;
}

.mini-btn {
    width: 15px;
    height: 15px;
    border: 1px solid #bdbdbd;
    background: #f6f6f6;
    color: #111;
    font: bold 12px/13px "Liberation Sans", sans-serif;
    text-align: center;
    overflow: hidden;
    display: flex;
    justify-content: center;
    align-items: center;
}

.mini-restore {
    width: 9px;
    height: 9px;
    border: 1.500px solid #111;
    border-top-width: 3px;
}

.toolbars {
    height: 60px;
    background: #f2f1ef;
}

.tool-row {
    display: flex;
}

.row-one {
    height: 29px;
}

.row-two {
    height: 29px;
    padding-right: 3px;
}

.bar {
    display: flex;
    align-items: center;
    height: 100%;
    border-right: 1px solid #d6d6d6;
    border-bottom: 1px solid #d6d6d6;
    padding-right: 3px;
}

.row-one .bar {
    margin-left: 67px;
    padding-left: 12px;
    padding-top: 1px;
}

.row-two .bar {
    padding-left: 23px;
}

.tool {
    width: 23.3px;
    height: 22px;
    flex: none;
    display: flex;
    align-items: center;
    justify-content: center;
}

.row-two .bar .tool {
    width: 23.2px;
}

.tool svg {
    width: 16px;
    height: 16px;
}

.tool.help {
    color: #16168c;
    font: bold 19px "Liberation Sans", sans-serif;
}

.tool.pressed {
    border: 1px solid #dcdcdc;
}

.sep {
    width: 7px;
    height: 22px;
    flex: none;
    position: relative;
}

.sep::after {
    content: "";
    position: absolute;
    left: 50%;
    top: 2px;
    bottom: 2px;
    border-left: 1px solid #cfcfcf;
}

.sep.wide { width: 10px; }
.sep.wider { width: 11px; }
.sep.mid { width: 12px; }
.sep.big { width: 16px; }
.sep.thin { width: 7.500px; }
.gap-24 { width: 24px; flex: none; }

.caret {
    width: 13px;
    flex: none;
    position: relative;
    height: 10px;
}

.caret::after {
    content: "";
    position: absolute;
    left: 3px;
    top: 3px;
    border: 3px solid transparent;
    border-top-color: #333;
}

.caret.short { width: 9px; }
.caret.short::after { left: 1px; }

.dropdown {
    width: 126px;
    height: 21px;
    margin-left: 2px;
    flex: none;
    display: flex;
    align-items: center;
    border: 1px solid #a8a8a8;
    border-radius: 3px;
    background: linear-gradient(180deg, #f6f6f6, #d9d9d9);
    padding: 0 5px;
    font-size: 11px;
    color: #333;
    white-space: nowrap;
}

.drop-arrow {
    margin-left: auto;
    margin-top: 5px;
    border: 4px solid transparent;
    border-top: 5px solid #222;
}

.sim-switch {
    margin-left: auto;
    margin-right: 7px;
    display: flex;
    align-items: center;
    gap: 6px;
}

.switch-box {
    width: 32px;
    height: 15px;
    border: 2px solid #444;
    background: #f2f2f2;
    display: flex;
    align-items: center;
    justify-content: center;
    gap: 2px;
    font: bold 9px "Liberation Sans", sans-serif;
    color: #333;
}

.switch-box.off {
    border-color: #bbb;
}

.sw-zero {
    width: 15px;
    text-align: center;
}

.sw-one {
    width: 11px;
    background: #bbb;
    text-align: center;
}

.sw-pause {
    width: 5px;
    height: 9px;
    border-left: 1px solid #aaa;
    border-right: 1px solid #aaa;
}

.zoom-tools {
    margin-left: auto;
    display: flex;
    align-items: center;
}

.main {
    height: 883px;
    display: flex;
    padding-left: 5px;
    border-top: 1px solid #dcdcdc;
}

.work {
    width: 1312px;
    height: 874px;
    padding-top: 2px;
    background: #acaaac;
    border-bottom: 1px solid #ddd;
    box-shadow: 0 4px 0 #f5f4f2, 0 6px 0 #9a9a9a, 2px 0 0 #fff;
    flex: none;
}

.sheet {
    display: block;
    box-shadow: 4px 4px 6px #4a4a4a;
}

.frame path {
    fill: none;
    stroke: #858585;
    stroke-width: 2.6;
}

.ticks path {
    fill: none;
    stroke: #8e8e8e;
    stroke-width: 1;
}

.ruler text {
    fill: #c4c4c4;
    font: 10px "Liberation Sans", sans-serif;
    text-anchor: middle;
}

.wire path {
    fill: none;
    stroke: #ef6150;
    stroke-width: 1.6;
}

.sym path {
    fill: none;
    stroke: #333;
    stroke-width: 1.2;
}

.node circle {
    fill: #e8322a;
}

.part text {
    fill: #3e3e3e;
    font: bold 13px "Liberation Sans", sans-serif;
}

.part text.mid {
    text-anchor: middle;
}

.cursor {
    fill: #fff;
    stroke: #555;
    stroke-width: 1;
}

.toolbox {
    width: 28px;
    margin-left: 5px;
    background: #f1f1f5;
    display: flex;
    flex-direction: column;
    align-items: center;
    border-left: 1px solid #fff;
    height: 565px;
    padding-top: 13px;
    box-shadow: -1px 0 0 #d5d5d5, 0 1px 0 #cfcfcf;
}

.toolbox svg {
    width: 17px;
    height: 17px;
    display: block;
    flex: none;
}

.bench {
    display: flex;
    flex-direction: column;
    gap: 5px;
    height: 399px;
}

.bench-group {
    width: 100%;
    display: flex;
    flex-direction: column;
    align-items: center;
    border-top: 1px solid #bcbcbc;
    padding: 8px 0 6px;
    gap: 4px;
}

.more {
    border: 4px solid transparent;
    border-left: 5px solid #222;
    width: 0;
    height: 0;
    margin-left: 4px;
}

.more.off {
    border-left-color: #c4c4c4;
}

.tabbar {
    height: 24px;
    display: flex;
    align-items: stretch;
    padding-left: 4px;
    gap: 1px;
}

.tab {
    width: 66px;
    display: flex;
    align-items: center;
    gap: 5px;
    padding-left: 3px;
    border: 1px solid #888;
    border-top: none;
    border-radius: 0 0 4px 4px;
    box-shadow: 1px 1px 0 #777;
    font-size: 12px;
    color: #555;
    background: #eeeceb;
    margin-bottom: 2px;
}

.tab svg {
    width: 16px;
    height: 16px;
    flex: none;
}

.tab.active {
    width: 81px;
    background: #f8f7f6;
    gap: 4px;
    padding-left: 2px;
}

.tab-end {
    width: 16px;
    height: 16px;
    margin-left: auto;
    margin-right: 30px;
    align-self: center;
}

.statusbar {
    height: 23px;
    display: flex;
    align-items: center;
    padding-left: 2px;
    border-top: 1px solid #b4b4b4;
    font-size: 11.500px;
    color: #4a3a3a;
}

.status-dash {
    margin-left: 996px;
}

.panes {
    margin-left: auto;
    margin-right: 5px;
    display: flex;
    gap: 2px;
}

.panes i {
    width: 7px;
    height: 14px;
    border: 1px solid #d0d0d0;
    border-top-color: #aaa;
}

.taskbar {
    height: 41px;
    display: flex;
    align-items: center;
    background: linear-gradient(90deg, #7e9dbb 0, #a6bdd6 260px, #a6bdd6 1100px, #86a3be 1240px, #6e8ca8 1350px);
    border-top: 1px solid #41515f;
}

.task-start {
    width: 56px;
    flex: none;
    display: flex;
    justify-content: flex-end;
    padding-right: 10px;
}

.task-start svg {
    width: 36px;
    height: 36px;
}

.task-item {
    width: 62px;
    height: 39px;
    flex: none;
    margin-left: 2px;
    display: flex;
    align-items: center;
    justify-content: center;
    border: 1px solid transparent;
}

.task-item.first {
    margin-left: 8px;
}

.task-item svg {
    width: 30px;
    height: 30px;
}

.task-item.open {
    border-color: #60788e;
    border-radius: 3px;
    background: linear-gradient(180deg, #c4d4e4, #a9c1d9);
}

.task-item.push-a {
    margin-left: 5px;
}

.task-item.push-b {
    margin-left: 4px;
}

.tray {
    margin-left: auto;
    display: flex;
    align-items: center;
}

.tray-ico {
    width: 25px;
    display: flex;
    justify-content: center;
}

.tray-ico svg {
    width: 18px;
    height: 18px;
}

.tray-up {
    border: 4px solid transparent;
    border-bottom: 5px solid #eef3f8;
    margin-top: -4px;
}

.clock {
    width: 70px;
    margin-left: 6px;
    text-align: center;
    font-size: 11.500px;
    line-height: 16px;
    color: #e4ecf4;
}

.show-desktop {
    width: 16px;
    height: 40px;
    margin-left: 2px;
    background: linear-gradient(180deg, #7c8d9e, #56697c);
    border-left: 1px solid #3f4f5e;
}

/* teams call bar and share notice sit over the shared screen */
.call-bar {
    position: absolute;
    left: 657px;
    top: 908px;
    width: 606px;
    height: 65px;
    display: flex;
    border-radius: 3px;
    overflow: hidden;
    box-shadow: 0 3px 8px rgba(0, 0, 0, 0.4);
    background: #3b3b3b;
}

.call-time {
    width: 85px;
    flex: none;
    text-align: center;
    line-height: 65px;
    color: #707070;
    font-size: 16px;
    letter-spacing: 1px;
    border-right: 1px solid #111;
}

.call-main {
    width: 261px;
    flex: none;
    display: flex;
    background: #3f3f3f;
    padding-left: 2px;
}

.call-side {
    width: 195px;
    flex: none;
    display: flex;
    background: #363636;
}

.call-btn {
    width: 64.6px;
    flex: none;
    display: flex;
    align-items: center;
    justify-content: center;
}

.call-btn svg {
    width: 28px;
    height: 28px;
}

.call-end {
    flex: 1;
    background: #95303f;
    display: flex;
    align-items: center;
    justify-content: center;
}

.call-end svg {
    width: 28px;
    height: 28px;
}

.share-banner {
    position: absolute;
    left: 742px;
    top: 984px;
    width: 436px;
    height: 45px;
    display: flex;
    align-items: center;
    background: #fff;
    box-shadow: 0 1px 4px rgba(0, 0, 0, 0.35);
    font-family: Roboto, Arial, sans-serif;
}

.share-grip {
    width: 5px;
    height: 11px;
    margin-left: 12px;
    border-left: 1px solid #c4c4c4;
    border-right: 1px solid #c4c4c4;
}

.share-text {
    margin-left: 12px;
    width: 254px;
    font-size: 12.200px;
    color: #5f6368;
    white-space: nowrap;
}

.share-stop {
    width: 106px;
    height: 34px;
    border: none;
    border-radius: 3px;
    background-color: #1a73e8;
    color: #fff;
    font: 500 13px Roboto, Arial, sans-serif;
}

.share-hide {
    margin-left: 12px;
    color: #5b8fdc;
    font-size: 13px;
}
```
